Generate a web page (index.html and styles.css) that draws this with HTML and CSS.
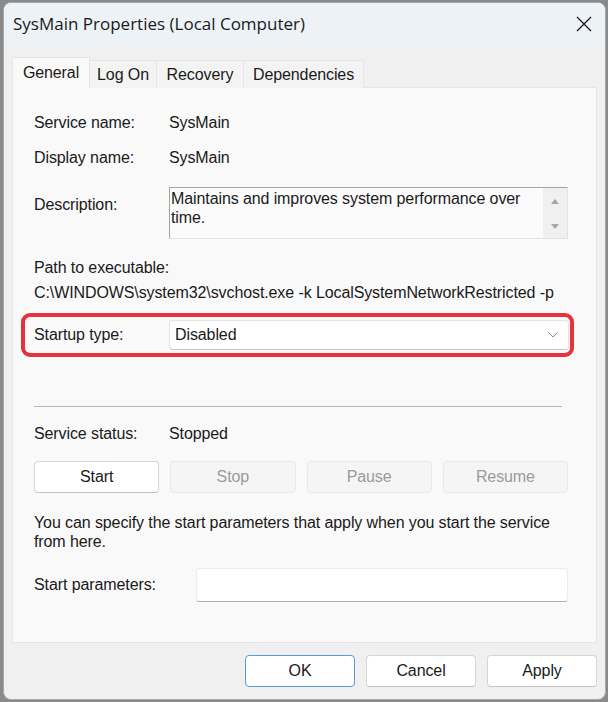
FILE: index.html
```html
<!DOCTYPE html>
<html>
<head>
<meta charset="utf-8">
<link rel="stylesheet" href="styles.css">
</head>
<body>
<div class="window">
  <div class="titlebar">
    <span class="title">SysMain Properties (Local Computer)</span>
    <span class="close">
      <svg width="16" height="16" viewBox="0 0 16 16"><path d="M1 1 L15 15 M15 1 L1 15" stroke="#1b1b1b" stroke-width="1.3" fill="none"/></svg>
    </span>
  </div>
  <div class="body">
    <div class="tabs">
      <div class="tab active">General</div>
      <div class="tab">Log On</div>
      <div class="tab">Recovery</div>
      <div class="tab">Dependencies</div>
    </div>
    <div class="panel">
      <div class="row r-service">
        <span class="label">Service name:</span>
        <span class="value">SysMain</span>
      </div>
      <div class="row r-display">
        <span class="label">Display name:</span>
        <span class="value">SysMain</span>
      </div>
      <div class="row r-desc">
        <span class="label desc-label">Description:</span>
        <div class="descbox">
          <div class="desctext">Maintains and improves system performance over<br>time.</div>
          <div class="scroll">
            <span class="arrow up"></span>
            <span class="arrow down"></span>
          </div>
        </div>
      </div>
      <div class="path-label">Path to executable:</div>
      <div class="path">C:\WINDOWS\system32\svchost.exe -k LocalSystemNetworkRestricted -p</div>
      <div class="highlight">
        <div class="row r-startup">
          <span class="label">Startup type:</span>
          <div class="select">
            <span>Disabled</span>
            <svg width="10" height="6" viewBox="0 0 10 6"><path d="M0.5 0.5 L5 5 L9.5 0.5" stroke="#8a8a8a" stroke-width="1" fill="none"/></svg>
          </div>
        </div>
      </div>
      <div class="separator"></div>
      <div class="row r-status">
        <span class="label">Service status:</span>
        <span class="value">Stopped</span>
      </div>
      <div class="svc-buttons">
        <div class="btn">Start</div>
        <div class="btn disabled">Stop</div>
        <div class="btn disabled">Pause</div>
        <div class="btn disabled">Resume</div>
      </div>
      <p class="note">You can specify the start parameters that apply when you start the service<br>from here.</p>
      <div class="row r-params">
        <span class="label">Start parameters:</span>
        <div class="input"></div>
      </div>
    </div>
    <div class="footer">
      <div class="btn dlg default">OK</div>
      <div class="btn dlg">Cancel</div>
      <div class="btn dlg">Apply</div>
    </div>
  </div>
</div>
</body>
</html>
```
FILE: styles.css
```css
html, body {
  margin: 0;
  padding: 0;
}
body {
  background: #8a8a8a;
  width: 608px;
  height: 702px;
  overflow: hidden;
  font-family: "Liberation Sans", Arial, sans-serif;
  font-size: 16px;
  letter-spacing: -0.1px;
  color: #1a1a1a;
}
.window {
  margin: 2px 0 0 3px;
  width: 601px;
  height: 696px;
  border: 1px solid #a8a8a8;
  border-radius: 8px;
  background: #f0f0f0;
  overflow: hidden;
  display: flex;
  flex-direction: column;
}
.titlebar {
  flex-shrink: 0;
  height: 42px;
  background: #edf2f7;
  display: flex;
  align-items: center;
  justify-content: space-between;
  padding: 0 13px 0 9px;
}
.title {
  font-family: "Open Sans", "Noto Sans", sans-serif;
  font-size: 17px;
  letter-spacing: 0;
  color: #1a1a1a;
  margin-top: -1px;
}
.close {
  display: flex;
  width: 16px;
  height: 16px;
}
.body {
  padding: 12px 8px 0 8px;
  display: flex;
  flex-direction: column;
}
.tabs {
  display: flex;
  align-items: flex-end;
  height: 31px;
  margin-bottom: -1px;
  position: relative;
  z-index: 1;
}
.tab {
  height: 28px;
  line-height: 28px;
  padding: 0;
  background: #f3f3f3;
  border: 1px solid #e6e6e6;
  border-bottom: none;
  box-sizing: border-box;
  font-size: 16px;
  white-space: nowrap;
  text-align: center;
}
.tab + .tab {
  border-left: none;
}
.tab:nth-child(2) { width: 67px; }
.tab:nth-child(3) { width: 87px; }
.tab:nth-child(4) { width: 120px; }
.tab.active {
  width: 78px;
  height: 31px;
  line-height: 29px;
  background: #f9f9f9;
}
.panel {
  height: 556px;
  box-sizing: border-box;
  background: #f9f9f9;
  border: 1px solid #e6e6e6;
  padding: 25px 28px 0 21px;
  display: flex;
  flex-direction: column;
}
.row {
  display: grid;
  grid-template-columns: 135px 1fr;
  align-items: center;
  line-height: 20px;
}
.r-display { margin-top: 15px; }
.r-desc {
  margin-top: 19px;
  align-items: start;
}
.desc-label { margin-top: 8px; }
.descbox {
  height: 52px;
  box-sizing: border-box;
  border-top: 1px solid #a3a3a3;
  border-left: 1px solid #a3a3a3;
  border-right: 1px solid #e3e3e3;
  border-bottom: 1px solid #e3e3e3;
  background: #fbfbfb;
  display: flex;
}
.desctext {
  flex: 1;
  padding: 1px 0 0 1px;
  line-height: 19px;
}
.scroll {
  width: 24px;
  background: #f0f0f0;
  display: flex;
  flex-direction: column;
  align-items: center;
  justify-content: space-between;
  padding: 11px 0 9px;
}
.arrow {
  width: 0;
  height: 0;
  border-left: 4px solid transparent;
  border-right: 4px solid transparent;
}
.arrow.up { border-bottom: 5px solid #a6a6a6; }
.arrow.down { border-top: 5px solid #a6a6a6; }
.path-label {
  margin-top: 19px;
  line-height: 20px;
}
.path {
  margin-top: 5px;
  line-height: 20px;
}
.highlight {
  margin: 10px -6px 0 -13px;
  border: 4px solid #e8323b;
  border-radius: 9px;
  padding: 3px 1px 3px 9px;
}
.select {
  height: 30px;
  box-sizing: border-box;
  background: #ffffff;
  border: 1px solid #e3e3e3;
  border-bottom-color: #c6c6c6;
  border-radius: 4px;
  display: flex;
  align-items: center;
  justify-content: space-between;
  padding: 0 10px 0 5px;
}
.separator {
  margin: 49px 6px 0 0;
  height: 1px;
  background: #b8b8b8;
}
.r-status { margin-top: 17px; }
.svc-buttons {
  margin-top: 17px;
  display: grid;
  grid-template-columns: repeat(4, 1fr);
  gap: 11px;
}
.btn {
  height: 32px;
  box-sizing: border-box;
  background: #ffffff;
  border: 1px solid #d6d6d6;
  border-bottom-color: #c2c2c2;
  border-radius: 4px;
  display: flex;
  align-items: center;
  justify-content: center;
}
.btn.disabled {
  background: #f5f5f5;
  border-color: #e9e9e9;
  color: #9a9a9a;
}
.note {
  margin: 20px 0 0 0;
  line-height: 19px;
}
.r-params {
  margin-top: 17px;
  grid-template-columns: 162px 1fr;
}
.input {
  height: 34px;
  box-sizing: border-box;
  background: #ffffff;
  border: 1px solid #ececec;
  border-bottom-color: #b0b0b0;
  border-radius: 3px;
}
.footer {
  margin-top: 12px;
  display: flex;
  justify-content: flex-end;
  gap: 11px;
}
.btn.dlg {
  width: 110px;
}
.btn.default {
  border-color: #5a9ad4;
}
```
